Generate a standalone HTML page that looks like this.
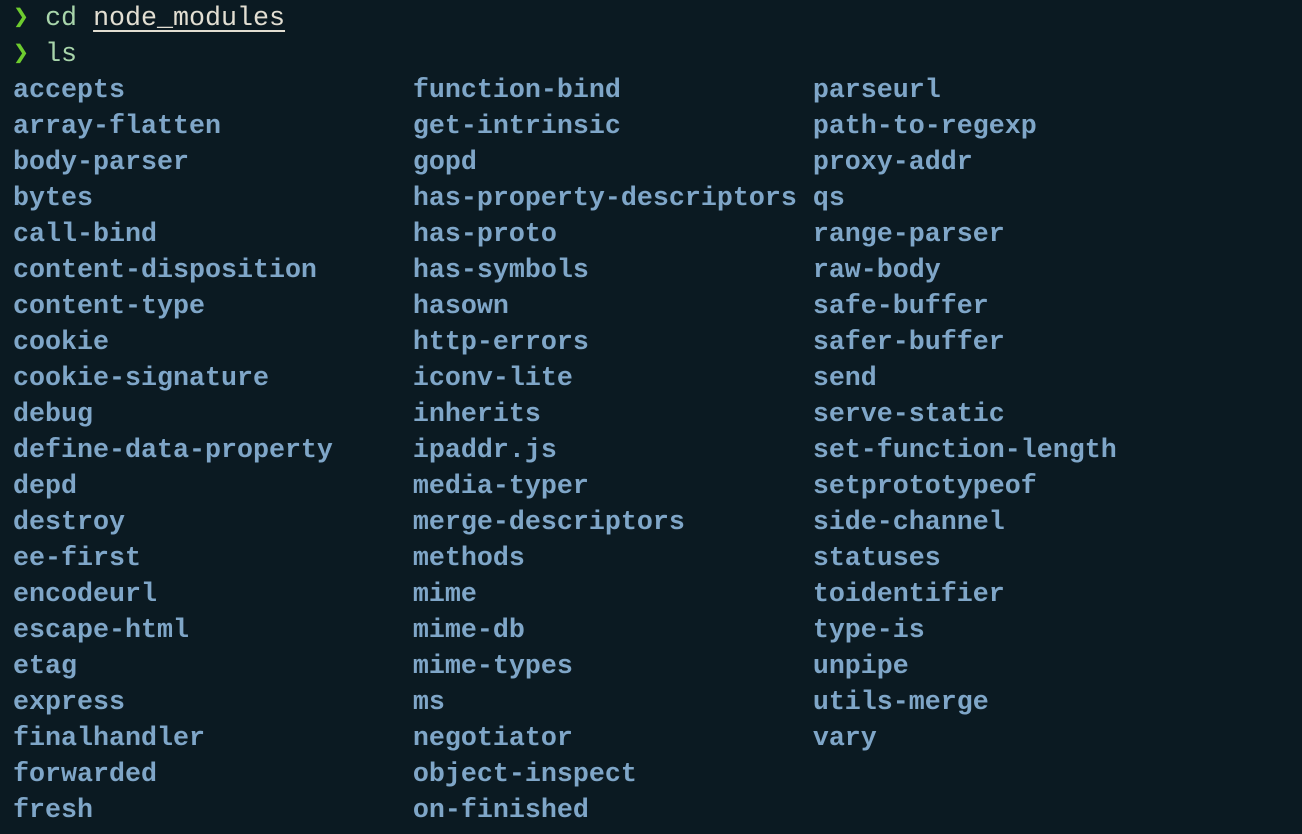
<!DOCTYPE html><html><head><style>
html,body{margin:0;background:#0b1a22;width:1302px;height:834px;overflow:hidden}
pre{margin:0;position:absolute;left:13px;top:1px;font-family:"Liberation Mono",monospace;font-size:26.67px;line-height:36px;color:#7fa6c8;font-weight:bold}
.g{color:#6ecc2f}.c{color:#a8d5ab;font-weight:normal}.u{color:#e2ded2;text-decoration:underline;text-underline-offset:5px;font-weight:normal}
</style></head><body><pre><span class="g">❯</span> <span class="c">cd</span> <span class="u">node_modules</span>
<span class="g">❯</span> <span class="c">ls</span>
accepts                  function-bind            parseurl
array-flatten            get-intrinsic            path-to-regexp
body-parser              gopd                     proxy-addr
bytes                    has-property-descriptors qs
call-bind                has-proto                range-parser
content-disposition      has-symbols              raw-body
content-type             hasown                   safe-buffer
cookie                   http-errors              safer-buffer
cookie-signature         iconv-lite               send
debug                    inherits                 serve-static
define-data-property     ipaddr.js                set-function-length
depd                     media-typer              setprototypeof
destroy                  merge-descriptors        side-channel
ee-first                 methods                  statuses
encodeurl                mime                     toidentifier
escape-html              mime-db                  type-is
etag                     mime-types               unpipe
express                  ms                       utils-merge
finalhandler             negotiator               vary
forwarded                object-inspect
fresh                    on-finished</pre></body></html>
